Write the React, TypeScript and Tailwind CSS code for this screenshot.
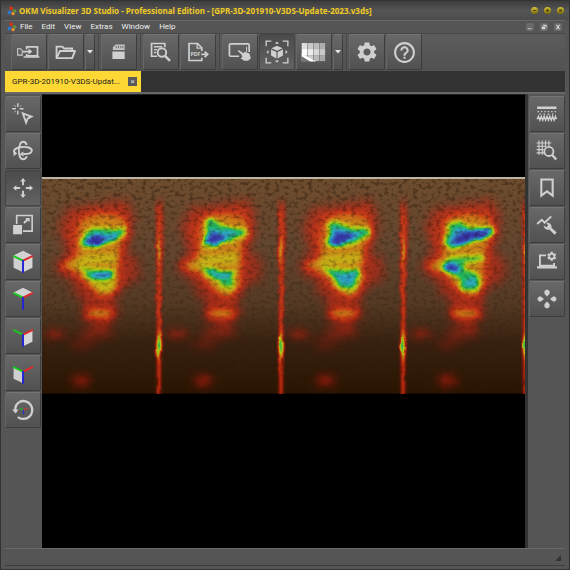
import { type ReactNode } from "react";
import { MdHelpOutline, MdSettings } from "react-icons/md";

const MENU = ["File", "Edit", "View", "Extras", "Window", "Help"];

const LINE = {
  fill: "none",
  stroke: "currentColor",
  strokeWidth: 1.8,
} as const;

function Glyph({ children }: { children: ReactNode }) {
  return (
    <svg viewBox="0 0 36 36" className="size-9" fill="currentColor" aria-hidden="true">
      {children}
    </svg>
  );
}

function Logo() {
  return (
    <svg viewBox="0 0 12 12" className="size-[10px] shrink-0" aria-hidden="true">
      <path d="M2.500 2Q5-.8 7.300 1.500L6.800 5.300 3.800 4.500Z" fill="#d8341c" />
      <path d="M7.500 4Q11.500 3.500 11.500 6.500L9 8 6.800 6.300Z" fill="#5f9440" />
      <path d="M6.300 6.800L9.500 8.500Q9.500 12 6 11L5.200 8Z" fill="#f0922a" />
      <path d="M4.800 5.800L4.800 8.500Q2.500 11.800.5 8.800L2 5.500Z" fill="#2a78d0" />
    </svg>
  );
}

const TransferIcon = () => (
  <Glyph>
    <path d="M6 14.500H9L10.800 16.300V21.300H6Z" {...LINE} strokeWidth={1.100} />
    <path d="M15.500 15V12.600H27V22H15.500V20" {...LINE} />
    <path d="M12.300 22.500H29V24H12.300Z" />
    <path d="M11.500 17.500H18" {...LINE} />
    <path d="M17.500 14.200L21.500 17.500 17.500 20.800Z" />
  </Glyph>
);

const FolderIcon = () => (
  <Glyph>
    <path d="M8 24V12.300H14L16 14.300H24.500V17" {...LINE} strokeWidth={2} />
    <path d="M11.500 17H27.500L24.500 24.500H8Z" {...LINE} strokeWidth={2} strokeLinejoin="round" />
  </Glyph>
);

const CardIcon = () => (
  <Glyph>
    <path d="M14.500 10H24V16H11.500V13Z" opacity=".9" />
    <path d="M11 17.500H24V25.500H11Z" />
    <path d="M15 11.500V14M17.500 11.500V14M20 11.500V14M22.200 11.500V14" stroke="#666" strokeWidth="1" />
  </Glyph>
);

const DocSearchIcon = () => (
  <Glyph>
    <path d="M14 22.500H8V9H22V13" {...LINE} />
    <path d="M10.500 12.500H19M10.500 15.500H14M10.500 18.500H13" {...LINE} strokeWidth={1.500} />
    <circle cx="19" cy="18.500" r="4.500" {...LINE} strokeWidth={2} />
    <path d="M22.300 22L27.500 27.300" {...LINE} strokeWidth={2.600} />
  </Glyph>
);

const PdfIcon = () => (
  <Glyph>
    <path d="M22 24V27H8.500V9H17.500L22 13.500V17" {...LINE} />
    <path d="M17 9V14H22" {...LINE} strokeWidth={1.300} />
    <text x="10" y="22.500" fontSize="5.500" fontWeight="700" fontFamily="Noto Sans, sans-serif">
      PDF
    </text>
    <path d="M21.500 20.500H27" {...LINE} />
    <path d="M25 17.500L28.300 20.500 25 23.500" {...LINE} />
  </Glyph>
);

const TouchIcon = () => (
  <Glyph>
    <path d="M17 22.500H8Q6.800 22.500 6.800 21.300V10.500Q6.800 9.300 8 9.300H26.500Q27.700 9.300 27.700 10.500V18" {...LINE} />
    <path d="M25 12.500V18" {...LINE} strokeWidth={1} />
    <path d="M15.500 17Q16.500 15.500 18 16.700L21.500 19.200 23 17.700 28 19.500 29.500 24.500 26.500 27.300H22.500L18.500 24.500 20.500 23.500 19.500 20.500Z" />
  </Glyph>
);

const FocusCubeIcon = () => (
  <Glyph>
    <path d="M6.500 12V6.500H12M24 6.500H29.500V12M29.500 24V29.500H24M12 29.500H6.500V24" {...LINE} strokeWidth={1.400} />
    <path d="M18 11.500L24 14 18 16.700 12 14ZM11.700 15.300L17.400 17.900V25L11.700 21.800ZM24.300 15.300L18.600 17.900V25L24.300 21.800Z" />
    <path d="M15.800 9.300L18 7 20.200 9.300ZM15.800 27L18 29.300 20.200 27ZM9 16L6.800 18 9 20.200ZM27 16L29.300 18 27 20.200Z" />
  </Glyph>
);

const PALETTE_ROWS = [
  ["#dedede", "#c8c8c8", "#bcbcbc", "#aeaeae"],
  ["#ffffff", "#ededed", "#d9d9d9", "#c9c9c9"],
  ["#e0e0e0", "#cccccc", "#b9b9b9", "#a8a8a8"],
];

const PaletteIcon = () => (
  <Glyph>
    {PALETTE_ROWS.map((row, y) =>
      row.map((c, x) => (
        <rect key={`${x}-${y}`} x={5 + x * 6.300} y={8.500 + y * 6.400} width="5.900" height="6.400" fill={c} />
      )),
    )}
    <path d="M5 22L15 28H5Z" fill="#777" />
    <path d="M5 19.500L20 28H14L5 22.500Z" fill="#fff" />
  </Glyph>
);

const SelectIcon = () => (
  <Glyph>
    <path d="M12.500 6.500V10.500M12.500 14.500V18.500M6.500 12.500H10.500M14.500 12.500H18.500" {...LINE} strokeWidth={1.500} />
    <path d="M8.800 8.800L10.300 10.300M16 9L14.700 10.300M8.800 16.200L10.300 14.700" {...LINE} strokeWidth={1} />
    <path d="M17.800 17.300L27 20.700 23 22.700 21.300 27Z" {...LINE} strokeWidth={2} />
  </Glyph>
);

const OrbitIcon = () => (
  <Glyph>
    <path d="M22 11.500C20.500 7.500 16.500 7 14.800 11C12.500 16 13.500 26.500 18 26.800C20 26.900 21.300 25.500 22 23.500" {...LINE} strokeWidth={2} />
    <path d="M10 20.500C7 18.500 8.500 15 15 14C22 13 27.500 14.500 27.300 17.700C27.200 20 23 21.300 18.500 21.200" {...LINE} strokeWidth={2} />
    <path d="M18.500 18.500V24L14.500 21.200ZM8 18L12 20.500 8 23.500Z" />
  </Glyph>
);

const MoveIcon = () => (
  <Glyph>
    <path d="M18 9V15M18 21V27M9 18H15M21 18H27" {...LINE} strokeWidth={2} />
    <path d="M15 11L18 7.300 21 11ZM15 25L18 28.700 21 25ZM11 15L7.300 18 11 21ZM25 15L28.700 18 25 21Z" />
  </Glyph>
);

const ScaleIcon = () => (
  <Glyph>
    <path d="M11.300 17V8H27.700V24.500H18" {...LINE} strokeWidth={1.700} />
    <path d="M7.500 18H17V27.800H7.500Z" />
    <path d="M19 16L23 12" {...LINE} strokeWidth={2.200} />
    <path d="M20.500 10.500H25V15Z" />
  </Glyph>
);

// Cube faces share one frame: centre 18,16 with the three axes drawn on top
function AxisIcon({ top, left, right }: { top?: boolean; left?: boolean; right?: boolean }) {
  return (
    <Glyph>
      {top && <path d="M18 6L28 11 18 16 8 11Z" fill="#d2d2d2" />}
      {left && <path d="M8 12L17.500 17V28.500L8 24Z" fill="#cfcfcf" />}
      {right && <path d="M28 12L18.500 17V28.500L28 24Z" fill="#d6d6d6" />}
      <path d="M18 16.500L7.500 11.500" stroke="#16c81c" strokeWidth="2" />
      <path d="M18 16.500L28.500 11.500" stroke="#e3272b" strokeWidth="2" />
      <path d="M18 16V29.500" stroke="#2222d8" strokeWidth="2" />
    </Glyph>
  );
}

const ResetIcon = () => (
  <Glyph>
    <path d="M14.500 9.300A9.500 9.500 0 1 1 12.500 25.500" {...LINE} strokeWidth={2.400} />
    <path d="M14.800 9.200A9.500 9.500 0 0 0 9.800 18" {...LINE} strokeWidth={2.400} />
    <path d="M6.500 17.500H13.300L10.200 21.800Z" />
    <path d="M18.500 18L14.500 16" stroke="#19b81e" strokeWidth="1.300" />
    <path d="M18.500 18L22.500 16" stroke="#d83030" strokeWidth="1.300" />
    <path d="M18.500 18V22.500" stroke="#2a2ad8" strokeWidth="1.300" />
  </Glyph>
);

const StrataIcon = () => (
  <Glyph>
    <path d="M7.500 10H28V12.600H7.500Z" />
    <path d="M8 15.500H28" {...LINE} strokeWidth={1.400} strokeDasharray="1.500 2.100" />
    <path d="M9.800 18.200H27" {...LINE} strokeWidth={1.400} strokeDasharray="1.500 3" />
    <path d="M7.500 23.500L9 20.500 10.500 24.500 12 20.500 13.500 24.500 15 20.500 16.500 24.500 18 20.500 19.500 24.500 21 20.500 22.500 24.500 24 20.500 25.500 24.500 27 20.500 28 23.500" {...LINE} strokeWidth={1.500} />
  </Glyph>
);

const GridSearchIcon = () => (
  <Glyph>
    <path d="M9.500 7V22M13 7V22M16.500 7V14M20 7V13M7 9.500H22.500M7 13H17M7 16.500H14.500M7 20H15" {...LINE} strokeWidth={1.200} />
    <circle cx="20" cy="18.500" r="4.800" {...LINE} strokeWidth={1.900} />
    <path d="M23.500 22.200L27.800 27" {...LINE} strokeWidth={2.500} />
  </Glyph>
);

const BookmarkIcon = () => (
  <Glyph>
    <path d="M12 9H24V26L18 21.500 12 26Z" {...LINE} strokeWidth={2.200} />
  </Glyph>
);

const AnalyzeIcon = () => (
  <Glyph>
    <path d="M7.500 17L12.500 12.500 15.500 15.500 22.500 8.800" {...LINE} strokeWidth={2} />
    <path d="M14.500 18.500L17.300 20.300 19.200 18.500 17.300 15.700C20.500 15 23.500 17.500 22.700 20.800L28.300 26 26 28.300 20.500 22.800C17.500 23.700 14.500 21.700 14.500 18.500Z" />
  </Glyph>
);

const DeviceSettingsIcon = () => (
  <Glyph>
    <path d="M17 11H10.500V22H25.500V19" {...LINE} strokeWidth={2} />
    <path d="M7.500 22.500H28.500V24.800H7.500Z" />
    <MdSettings x="17" y="6" size={12} />
  </Glyph>
);

const PadIcon = () => (
  <Glyph>
    <path d="M15.300 9.500H20.700V12.500L18 15.300 15.300 12.500ZM15.300 26.500H20.700V23.500L18 20.700 15.300 23.500Z" />
    <path d="M9.500 15.300V20.700H11.500L14.800 18 11.500 15.300ZM26.500 15.300V20.700H24.500L21.200 18 24.500 15.300Z" />
    <path d="M15.300 9.800Q18 6 20.700 9.800ZM15.300 26.200Q18 30 20.700 26.200ZM9.800 15.300Q6 18 9.800 20.700ZM26.200 15.300Q30 18 26.200 20.700Z" />
  </Glyph>
);

const VIEW_TOOLS = [
  { label: "Select", icon: <SelectIcon /> },
  { label: "Rotate", icon: <OrbitIcon /> },
  { label: "Move", icon: <MoveIcon />, active: true },
  { label: "Scale", icon: <ScaleIcon /> },
  { label: "Perspective view", icon: <AxisIcon top left right /> },
  { label: "Top view", icon: <AxisIcon top /> },
  { label: "Side view", icon: <AxisIcon right /> },
  { label: "Front view", icon: <AxisIcon left /> },
  { label: "Reset view", icon: <ResetIcon /> },
];

const SCAN_TOOLS = [
  { label: "Soil type", icon: <StrataIcon /> },
  { label: "Inspect grid", icon: <GridSearchIcon /> },
  { label: "Bookmark", icon: <BookmarkIcon /> },
  { label: "Signal correction", icon: <AnalyzeIcon /> },
  { label: "Device settings", icon: <DeviceSettingsIcon /> },
  { label: "Position", icon: <PadIcon /> },
];

function ToolButton({ label, active, children }: { label: string; active?: boolean; children: ReactNode }) {
  return (
    <button
      type="button"
      aria-label={label}
      className={`flex size-9 shrink-0 items-center justify-center overflow-hidden rounded-xs border text-[#d0d0d0] ${
        active
          ? "border-[#454545] bg-linear-to-b from-[#4b4b4b] to-[#626262]"
          : "border-t-[#747474] border-r-[#3d3d3d] border-b-[#3d3d3d] border-l-[#666] bg-linear-to-b from-[#686868] to-[#515151]"
      }`}
    >
      {children}
    </button>
  );
}

function DropButton({ label }: { label: string }) {
  return (
    <button
      type="button"
      aria-label={label}
      className="flex h-9 w-[10px] items-center justify-center rounded-xs border border-t-[#747474] border-r-[#3d3d3d] border-b-[#3d3d3d] border-l-[#666] bg-linear-to-b from-[#686868] to-[#515151]"
    >
      <svg viewBox="0 0 6 4" className="h-1 w-1.5 shrink-0" aria-hidden="true">
        <path d="M0 0H6L3 3.500Z" fill="#e4e4e4" />
      </svg>
    </button>
  );
}

function Separator() {
  return (
    <div className="flex h-9 w-1 justify-center">
      <span className="w-px bg-[#484848]" />
    </div>
  );
}

// Grey value is the signal strength, the filter below turns it into colour
const STRONG = "#b4b4b4";

const TRACES: { shift: number; cores: { d: string; fill: string }[] }[] = [
  {
    shift: -6,
    cores: [
      { d: "M120 218L130 190 158 170 205 172 255 172 252 192 218 214 165 230 128 230Z", fill: STRONG },
      { d: "M136 210L165 188 205 188 242 180 232 202 190 217 150 224Z", fill: "#d6d6d6" },
      { d: "M136 214L165 191 200 205 170 226Z", fill: "#fff" },
      { d: "M118 284L150 296 222 296 222 322 190 330 150 328Z", fill: STRONG },
      { d: "M155 308L217 304 210 322 168 322Z", fill: "#e8e8e8" },
    ],
  },
  {
    shift: -13,
    cores: [
      { d: "M130 220L140 145 160 142 190 165 262 176 255 194 200 215 160 230 130 228Z", fill: STRONG },
      { d: "M138 218L148 175 190 180 244 182 202 207 160 224Z", fill: "#cecece" },
      { d: "M138 212L162 183 198 200 172 226Z", fill: "#fafafa" },
      { d: "M120 284L150 290 180 300 226 300 218 352 190 350 175 325 145 318Z", fill: STRONG },
      { d: "M146 296L180 306 218 304 208 324 162 320Z", fill: "#cecece" },
    ],
  },
  {
    shift: -20,
    cores: [
      { d: "M138 222L150 190 145 155 168 150 210 168 270 172 272 190 225 220 165 230Z", fill: STRONG },
      { d: "M148 214L162 168 205 180 256 182 212 214 168 224Z", fill: "#d2d2d2" },
      { d: "M150 214L172 184 228 188 200 217 170 226Z", fill: "#fafafa" },
      { d: "M128 285L170 295 240 295 238 325 220 355 180 352 155 320Z", fill: STRONG },
      { d: "M160 308L234 303 216 344 188 342Z", fill: "#d0d0d0" },
    ],
  },
  {
    shift: -27,
    cores: [
      { d: "M134 225L148 158 180 152 215 168 282 170 286 190 240 208 160 236Z", fill: STRONG },
      { d: "M148 217L168 173 215 176 278 174 274 194 220 210 168 228Z", fill: "#dadada" },
      { d: "M163 212L195 184 272 178 268 194 215 204 178 222Z", fill: "#fff" },
      { d: "M125 290L150 262 200 258 252 256 250 268 195 274 200 300 238 305 240 356 190 358 175 320 130 300Z", fill: STRONG },
      { d: "M134 290L158 276 188 292 168 304Z", fill: "#fff" },
      { d: "M190 342L215 318 234 325 232 350 193 352Z", fill: "#ccc" },
    ],
  },
];

function Trace({ x, shift, cores }: { x: number; shift: number; cores: { d: string; fill: string }[] }) {
  return (
    <g transform={`translate(${x} 0)`}>
      <g filter="url(#wide)">
        <path
          d="M75 105L150 98 255 78 282 130 276 200 255 240 295 262 298 325 250 350 225 385 150 405 85 370 92 345 50 310 32 290 68 240 42 170Z"
          fill="#2e2e2e"
        />
        <path d="M105 130L245 115 262 185 240 250 240 340 210 380 160 380 110 320 45 285 100 250 78 190Z" fill="#505050" />
        <path d="M120 388L220 380 236 430 190 475 120 445Z" fill="#363636" />
        <ellipse cx="38" cy="490" rx="36" ry="12" fill="#444" />
        <ellipse cx="165" cy="485" rx="56" ry="20" fill="#2a2a2a" />
        <ellipse cx="120" cy="520" rx="40" ry="14" fill="#222" />
        <ellipse cx="118" cy="630" rx="32" ry="19" fill="#363636" />
      </g>
      <g filter="url(#mid)">
        <path d="M118 145L180 128 240 142 258 182 236 222 226 245 226 350 190 376 150 354 114 308 50 286 104 260 108 218Z" fill="#6a6a6a" />
        <path d="M126 252L232 248 226 276 120 284 70 288Z" fill="#808080" />
        <path d="M140 325H226L212 366 170 362Z" fill="#848484" />
        <ellipse cx="172" cy="428" rx="44" ry="13" fill="#707070" />
      </g>
      <g filter="url(#tight)" transform={`translate(${shift} 0)`}>
        {cores.map((c) => (
          <path key={c.d} d={c.d} fill={c.fill} />
        ))}
      </g>
      {/* Strip where two scan lines meet */}
      <g filter="url(#strip)">
        <path d="M340 90H366L370 200 362 330 358 690H344Z" fill="#303030" />
        <path d="M348 120H356V690H348Z" fill="#5c5c5c" />
        <path d="M348 190L358 240 350 290Z" fill="#949494" />
        <path d="M352 485L361 525 352 565 343 525Z" fill="#c8c8c8" />
      </g>
    </g>
  );
}

function ScanPlot() {
  return (
    <svg
      viewBox="0 24 1452 645"
      className="block h-auto w-full border-t-2 border-[#bdb5a4]"
      role="img"
      aria-label="Ground scan"
    >
      <defs>
        <linearGradient id="soil" x1="0" y1="0" x2="0" y2="1">
          <stop offset="0" stopColor="#6e4c2e" />
          <stop offset=".3" stopColor="#63462e" />
          <stop offset=".58" stopColor="#543a24" />
          <stop offset=".76" stopColor="#382110" />
          <stop offset="1" stopColor="#291402" />
        </linearGradient>
        <linearGradient id="fade" x1="0" y1="0" x2="0" y2="1">
          <stop offset="0" stopColor="#fff" />
          <stop offset=".25" stopColor="#aaa" />
          <stop offset=".6" stopColor="#777" />
          <stop offset=".8" stopColor="#222" />
        </linearGradient>
        <mask id="grainMask">
          <rect y="24" width="1452" height="645" fill="url(#fade)" />
        </mask>
        <filter id="grain" x="0" y="0" width="1" height="1" colorInterpolationFilters="sRGB">
          <feTurbulence type="fractalNoise" baseFrequency=".07 .09" numOctaves="4" seed="8" />
          <feColorMatrix values="0 0 0 0 .12  0 0 0 0 .07  0 0 0 0 .02  5 0 0 0 -2.500" />
        </filter>
        <filter id="wide" x="-.2" y="-.2" width="1.400" height="1.400" colorInterpolationFilters="sRGB">
          <feGaussianBlur stdDeviation="14" />
        </filter>
        <filter id="mid" x="-.2" y="-.3" width="1.400" height="1.600" colorInterpolationFilters="sRGB">
          <feGaussianBlur stdDeviation="10" />
        </filter>
        <filter id="tight" x="-.2" y="-.2" width="1.400" height="1.400" colorInterpolationFilters="sRGB">
          <feGaussianBlur stdDeviation="6.500" />
        </filter>
        <filter id="strip" x="-2" y="-.1" width="5" height="1.200" colorInterpolationFilters="sRGB">
          <feGaussianBlur stdDeviation="4 12" />
        </filter>
        <filter
          id="spectrum"
          filterUnits="userSpaceOnUse"
          x="-20"
          y="0"
          width="1500"
          height="700"
          colorInterpolationFilters="sRGB"
        >
          <feTurbulence type="fractalNoise" baseFrequency=".03" numOctaves="2" seed="3" result="noise" />
          <feDisplacementMap in="SourceGraphic" in2="noise" scale="10" xChannelSelector="R" yChannelSelector="G" />
          <feColorMatrix values="1 0 0 0 0  1 0 0 0 0  1 0 0 0 0  1 0 0 0 0" />
          <feComponentTransfer>
            <feFuncR type="table" tableValues=".75 .8 .86 .9 .88 .82 .62 .12 .16 .2 .2" />
            <feFuncG type="table" tableValues=".06 .1 .13 .22 .5 .76 .82 .74 .68 .4 .16" />
            <feFuncB type="table" tableValues=".04 .05 .06 .07 .08 .08 .08 .36 .78 .78 .66" />
            <feFuncA type="table" tableValues="0 .22 .55 .78 .84 .9 .95 .95 .95 .95 .95" />
          </feComponentTransfer>
        </filter>
      </defs>
      <rect y="24" width="1452" height="645" fill="url(#soil)" />
      <g filter="url(#spectrum)">
        <rect x="-20" width="1500" height="700" fill="#000" />
        {TRACES.map((t, i) => (
          <Trace key={t.shift} x={i * 367} shift={t.shift} cores={t.cores} />
        ))}
      </g>
      <g mask="url(#grainMask)">
        <rect y="24" width="1452" height="645" filter="url(#grain)" opacity=".4" />
      </g>
    </svg>
  );
}

function TitleBar() {
  return (
    <header className="flex h-[19px] items-center gap-0.5 bg-linear-to-b from-[#3c3c3c] via-[#555] to-[#4c4c4c] pr-[5px] pl-1.5">
      <Logo />
      <h1 className="flex-1 truncate text-[8px] font-bold text-[#f0cb22]">
        OKM Visualizer 3D Studio - Professional Edition - [GPR-3D-201910-V3DS-Update-2023.v3ds]
      </h1>
      <div className="flex gap-1.5">
        {["−", "+", "×"].map((sign) => (
          <button
            key={sign}
            type="button"
            className="flex size-[7px] items-center justify-center rounded-full bg-linear-to-b from-[#d9c53a] to-[#7a6a08] text-[7px] leading-none font-bold text-[#3c3408]"
          >
            {sign}
          </button>
        ))}
      </div>
    </header>
  );
}

function ChildControls() {
  return (
    <div className="flex gap-1.5 text-[#d4d4d4]">
      {["M2 6H6V7H2Z", "M2 4H6V7H2ZM3.500 2H7.500V5H6.500V3.300H3.500Z", "M2 2H3.500L4.500 3.500 5.500 2H7L5.300 4.500 7 7H5.500L4.500 5.500 3.500 7H2L3.700 4.500Z"].map(
        (d, i) => (
          <button
            key={d}
            type="button"
            aria-label={["Minimize", "Restore", "Close"][i]}
            className="size-2 rounded-xs bg-[#6a6a6a]"
          >
            <svg viewBox="0 0 9 9" className="size-2" fill="currentColor" aria-hidden="true">
              <path d={d} />
            </svg>
          </button>
        ),
      )}
    </div>
  );
}

export default function App() {
  return (
    <div className="flex h-screen w-full flex-col overflow-hidden border border-[#333] bg-[#555] font-['Noto_Sans',sans-serif]">
      <TitleBar />
      <div className="mx-1 flex min-h-0 flex-1 flex-col border-t border-[#676767]">
        <nav className="flex h-[13px] items-center justify-between border-b border-[#474747] pr-[3px] pl-0.5">
          <div className="flex items-center gap-[9px] font-[Roboto,sans-serif] text-[8px] text-[#f0f0f0]">
            <span className="-mr-1.5 flex">
              <Logo />
            </span>
            {MENU.map((m) => (
              <button key={m} type="button">
                {m}
              </button>
            ))}
          </div>
          <ChildControls />
        </nav>

        <div className="flex h-[37px] items-start gap-px bg-linear-to-b from-[#5c5c5c] to-[#515151] pl-1.5">
          <ToolButton label="Import from device"><TransferIcon /></ToolButton>
          <ToolButton label="Open"><FolderIcon /></ToolButton>
          <DropButton label="Recent files" />
          <Separator />
          <ToolButton label="Save"><CardIcon /></ToolButton>
          <Separator />
          <ToolButton label="Preview"><DocSearchIcon /></ToolButton>
          <ToolButton label="Export PDF"><PdfIcon /></ToolButton>
          <Separator />
          <ToolButton label="Touch mode"><TouchIcon /></ToolButton>
          <ToolButton label="Fit to view" active><FocusCubeIcon /></ToolButton>
          <ToolButton label="Colour palette"><PaletteIcon /></ToolButton>
          <DropButton label="More palettes" />
          <Separator />
          <ToolButton label="Settings"><MdSettings size={24} /></ToolButton>
          <ToolButton label="Help"><MdHelpOutline size={25} /></ToolButton>
        </div>

        <div className="flex h-[21px] bg-[#333]">
          <div className="flex items-center gap-2 bg-[#fdd835] pr-1 pl-[7px] font-[Roboto,sans-serif] text-[8px] text-[#222]">
            <span>GPR-3D-201910-V3DS-Updat...</span>
            <button
              type="button"
              className="flex size-[9px] items-center justify-center bg-[#5a5a5a] text-[8px] leading-none text-[#ddd]"
            >
              ×
            </button>
          </div>
        </div>

        <div className="flex min-h-0 flex-1 border-t-2 border-[#686868]">
          <aside className="flex w-[37px] shrink-0 flex-col gap-px pt-0.5">
            {VIEW_TOOLS.map((t) => (
              <ToolButton key={t.label} label={t.label} active={t.active}>
                {t.icon}
              </ToolButton>
            ))}
          </aside>
          <main className="min-w-0 flex-1 border-t border-[#222] bg-black pt-[82px]">
            <ScanPlot />
          </main>
          <aside className="flex w-[40px] shrink-0 flex-col items-end gap-px border-l-3 border-[#333] pt-0.5">
            {SCAN_TOOLS.map((t) => (
              <ToolButton key={t.label} label={t.label}>
                {t.icon}
              </ToolButton>
            ))}
          </aside>
        </div>
      </div>

      <footer className="mx-1 mb-[3px] flex h-[18px] items-end justify-end border-y border-t-[#686868] border-b-[#3c3c3c] bg-[#555] pr-1 pb-1">
        <svg viewBox="0 0 6 6" className="size-1.5" aria-hidden="true">
          <path d="M6 0V6H0Z" fill="#333" />
        </svg>
      </footer>
    </div>
  );
}
